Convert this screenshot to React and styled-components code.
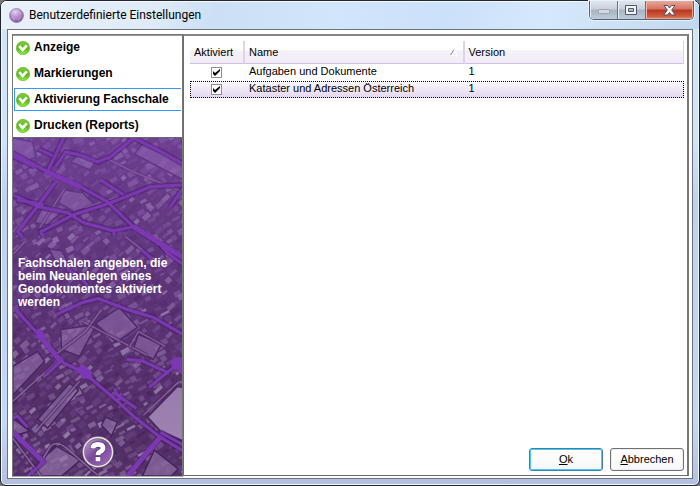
import React, { useState } from "react";
import styled, { createGlobalStyle, css } from "styled-components";

const GlobalStyle = createGlobalStyle`
  *, *::before, *::after { box-sizing: border-box; }
  body {
    margin: 0;
    background: #77777b;
    color: #000;
    font: 11px/13px "Liberation Sans", Arial, sans-serif;
  }
  button, input { font: inherit; color: inherit; margin: 0; }
`;

const Window = styled.div`
  display: flex;
  flex-direction: column;
  min-height: 100vh;
  padding: 0 6px 6px;
  border: 1px solid #23272d;
  border-radius: 7px 7px 6px 6px;
  background: linear-gradient(180deg, #dbe8f7 0, #d0e4fa 40px, #cfe4fb 140px, #bdd2ec 200px, #c3d9f3 420px, #b4bfe0 100%);
  box-shadow: inset 0 0 0 1px #f0f7fe;
`;

const TitleBar = styled.header`
  display: flex;
  align-items: flex-start;
  height: 28px;
  margin: 0 -6px;
  padding-left: 8px;
  border-radius: 6px 6px 0 0;
  background: linear-gradient(100deg, #e9f1fa 0, #dfebf8 22%, #cbdff5 31%, #d1e5fb 48%, #cbe1fa 64%, #d6e8fb 78%, #c2d8f0 100%);
  box-shadow: inset 0 1px 0 #f5faff;
`;

const AppIcon = styled.svg`
  width: 15px;
  height: 15px;
  margin-top: 7px;
`;

const Title = styled.h1`
  flex: 1;
  margin: 5px 0 0 5px;
  font: 400 12px/18px Roboto, "Noto Sans", sans-serif;
`;

const Controls = styled.div`
  display: flex;
  height: 19px;
  margin-right: 5px;
  border: 1px solid #59636e;
  border-top: 0;
  border-radius: 0 0 5px 5px;
  overflow: hidden;
  box-shadow: 0 0 0 1px #e6f1fc;
`;

const ControlButton = styled.button`
  display: grid;
  place-items: center;
  width: 28px;
  padding: 0;
  border: 0;
  border-right: 1px solid #68737e;
  background: linear-gradient(#dfe6ed 0, #c7d1db 45%, #a6b3c1 50%, #bdccdc 100%);
  box-shadow: inset 1px 0 0 #e8eef4;
  ${(p) => p.$close && css`
    width: 47px;
    border-right: 0;
    background: linear-gradient(#e8a99b 0, #d3725f 45%, #b93620 50%, #cf5b3c 85%, #e49277 100%);
    box-shadow: inset 1px 0 0 #edb4a7, inset -1px -1px 0 #e7a28f;
  `}
`;

const Client = styled.main`
  flex: 1;
  display: flex;
  padding: 4px 3px 1px 4px;
  border: 1px solid #6c7279;
  background: #fff;
`;

const Sidebar = styled.aside`
  flex: none;
  display: flex;
  flex-direction: column;
  width: 171px;
  border: 1px solid #777;
  border-bottom-color: #aaa;
`;

const Nav = styled.nav`
  display: flex;
  flex-direction: column;
  gap: 3px;
  padding: 0 1px;
  border-top: 1px solid #999;
  border-bottom: 1px solid #666;
`;

const NavItem = styled.button`
  display: flex;
  align-items: center;
  gap: 4px;
  height: 23px;
  padding: 0 0 0 1px;
  border: 1px solid ${(p) => (p.$current ? "#3399ff" : "transparent")};
  border-right: 0;
  background: #fff;
  font-size: 12px;
  font-weight: 700;
  text-align: left;
  white-space: nowrap;
`;

const CheckIcon = styled.svg`
  flex: none;
  width: 14px;
  height: 14px;
`;

const MapPane = styled.section`
  position: relative;
  isolation: isolate;
  flex: 1;
  display: flex;
  flex-direction: column;
  padding: 119px 5px 8px;
  overflow: hidden;
  color: #fff;
`;

const MapArt = styled.svg`
  position: absolute;
  inset: 0;
  z-index: -1;
  width: 100%;
  height: 100%;
`;

const Hint = styled.p`
  margin: 0 0 auto;
  font-size: 12px;
  font-weight: 700;
`;

const HelpButton = styled.button`
  align-self: center;
  display: block;
  width: 32px;
  height: 32px;
  padding: 0;
  border: 0;
  border-radius: 50%;
  background: none;
`;

const Content = styled.section`
  flex: 1;
  display: flex;
  flex-direction: column;
  min-width: 0;
  margin-bottom: 1px;
  padding: 5px 3px 4px 6px;
  border: 1px solid #6b6b6b;
  border-top: 2px solid #858585;
  border-right: 2px solid #777;
`;

const Table = styled.table`
  width: 100%;
  table-layout: fixed;
  border-collapse: separate;
  border-spacing: 0;
`;

const CheckColumn = styled.col`
  width: 55px;
`;

const HeadCell = styled.th`
  height: 23px;
  padding: 0 5px 0 4px;
  border-right: ${(p) => (p.$last ? 1 : 2)}px solid #e0d2ec;
  border-bottom: 1px solid #d3bfe3;
  background: linear-gradient(#fff 0, #fff 40%, #f5f1f9 45%, #f1ebf6 100%);
  font-weight: 400;
  text-align: left;
`;

const HeadLabel = styled.span`
  display: flex;
  align-items: center;
  justify-content: space-between;
`;

const Row = styled.tr`
  height: 17px;
  ${(p) => p.$selected && css`
    background: linear-gradient(#fbf9fc, #e4d6ee);
    outline: 1px dotted #000;
    outline-offset: -1px;
  `}
`;

const Cell = styled.td`
  height: 17px;
  padding: 0 4px 2px ${(p) => (p.$center ? 2 : 4)}px;
  text-align: ${(p) => (p.$center ? "center" : "left")};
  white-space: nowrap;
`;

const Tick = styled.input`
  appearance: none;
  display: block;
  width: 11px;
  height: 11px;
  margin: 2px auto 0;
  border: 1px solid #8f8f8f;
  background: #fff;
  &:checked {
    background: #fff url("data:image/svg+xml,%3Csvg xmlns='http://www.w3.org/2000/svg' viewBox='0 0 9 9'%3E%3Cpath d='M1 3v3l2 2 5-5V1L3 5z'/%3E%3C/svg%3E") center / 9px 9px;
  }
`;

const Footer = styled.footer`
  display: flex;
  justify-content: flex-end;
  gap: 7px;
  margin-top: auto;
`;

const Button = styled.button`
  width: 74px;
  height: 23px;
  padding: 0;
  border: 1px solid ${(p) => (p.$primary ? "#3c7fb1" : "#707070")};
  border-radius: 3px;
  background: linear-gradient(#fff, #f7f7f9);
  box-shadow: inset 0 0 0 1px ${(p) => (p.$primary ? "#48cdf1" : "#ededf3")};
`;

function createRandom(seed) {
  let value = seed;
  return () => {
    value = (value * 1664525 + 1013904223) % 4294967296;
    return value / 4294967296;
  };
}

const random = createRandom(47);
const roofColours = ["#a88bbf", "#8a62a6", "#6a4784", "#9a7cb2", "#452457", "#b8a3c8", "#71478d"];
const roofs = [];
for (let y = -150; y < 480; y += 7) {
  for (let x = -200; x < 380; x += 9) {
    roofs.push({
      x: x + random() * 4,
      y: y + random() * 3,
      width: 4 + random() * 6,
      height: 2 + random() * 4,
      fill: roofColours[Math.floor(random() * roofColours.length)],
      opacity: 0.3 + random() * 0.5,
      transform: `rotate(${Math.floor(random() * 2) * 15} ${x} ${y})`,
    });
  }
}

const fields = [
  "M0 0 20 4 23 19 9 26-4 12z",
  "M51 52 70 55 82 67 62 74 46 65z",
  "M29 71 49 74 35 87 22 85z",
  "M132 4 171 25V42L122 16z",
  "M83 186 107 170 125 190 104 205z",
  "M0 229 25 214 32 224 0 258z",
  "M25 282 57 246 66 253 35 291z",
  "M126 197 149 207 141 222 121 211z",
  "M67 15 83 24 78 32 58 24z",
  "M36 111 49 113 58 129 42 122z",
  "M0 281 17 294 0 299z",
  "M26 325 44 309 68 323 49 339H17z",
  "M142 313 166 332 159 339H130z",
  "M93 280 105 285 99 299 89 288z",
  "M48 192 84 187 67 219 49 212z",
];

const lanes = [
  "M70 184 135 218 M0 264 48 221 M72 70 106 59 M27 90 52 51",
  "M113 99 153 130 M25 292 67 244 M20 338 38 309Q44 303 54 311L85 338",
  "M131 278 167 244 M12 104 1 116 M89 172 73 194 42 218",
  "M0 301 28 339 M117 210 126 194 153 209 M95 21 121 34 171 54",
];

const roads = [
  "M0 15 35 34 68 49 95 64 121 89 148 107 171 120",
  "M52-2 38 27 34 36 M43 44 26 67 5 94 10 100",
  "M121 0 98 19 85 24 68 17 53 14 43 29 M121 0 146 12 171 26",
  "M171 47 138 49 98 65 61 77 28 94 31 99",
  "M0 57 26 69 55 75 71 85 101 93 121 89 M88 42 111 57",
  "M171 50 158 69 M0 18 22 29 M26 11 40 18 M31 67 4 62",
  "M55 132 68 140 75 148 M44 177 70 165 86 161 115 172 141 180 171 197",
  "M0 169 26 197 48 224 71 235 105 264 121 279 148 300 171 314",
  "M48 224 33 238 M102 251 105 258 124 271 M105 264 109 256",
  "M114 222 131 224 155 235 137 250 M155 235 164 228 171 237",
  "M0 281 5 279 15 290 M0 295 31 325 15 339 M148 300 115 339 M148 295 171 308",
  "M148 107 155 115 171 127 M129 112 139 121 M101 93 102 98",
];

function MapBackground() {
  return (
    <MapArt viewBox="0 0 170 339" preserveAspectRatio="xMidYMid slice" aria-hidden="true">
      <defs>
        <linearGradient id="mapTint" x1="0" y1="0" x2="0" y2="1">
          <stop offset="0" stopColor="#7d49ab" stopOpacity=".6" />
          <stop offset=".5" stopColor="#68398f" stopOpacity=".34" />
          <stop offset="1" stopColor="#402251" stopOpacity=".08" />
        </linearGradient>
      </defs>
      <rect width="171" height="339" fill="#553169" />
      <g transform="rotate(-42 85 170)">
        {roofs.map((roof, i) => <rect key={i} {...roof} />)}
      </g>
      {fields.map((d) => (
        <path key={d} d={d} fill="#9878af" fillOpacity=".7" stroke="#45225b" strokeWidth="1.5" />
      ))}
      <path d="M135 280 165 249 171 250V304L148 294z" fill="#ab91bd" stroke="#4b2762" strokeWidth="2" />
      {lanes.map((d) => (
        <g key={d} fill="none">
          <path d={d} stroke="#442158" strokeWidth="4" opacity=".6" />
          <path d={d} stroke="#9c80ad" strokeWidth="1.5" opacity=".8" />
        </g>
      ))}
      <rect width="171" height="339" fill="url(#mapTint)" />
      <g fill="none" strokeLinejoin="round">
        {roads.map((d) => <path key={d} d={d} stroke="#43205f" strokeWidth="6" opacity=".5" />)}
        {roads.map((d) => <path key={d} d={d} stroke="#7c37b3" strokeWidth="3" />)}
        <path d="M32 33 68 49 M121 89 171 120 M26 197 48 224 M65 232 79 241 M148 300 115 339 M0 295 31 325" stroke="#7c37b3" strokeWidth="5" />
      </g>
      <path d="m24 192 4-1 5 8-4 4-6-3z m42 39 3-5 11 9-2 7-9-1z m92-6 5-5h7v12h-9z" fill="#7c37b3" />
    </MapArt>
  );
}

function GreenCheck() {
  return (
    <CheckIcon viewBox="0 0 14 14" aria-hidden="true">
      <defs>
        <linearGradient id="green" x1="0" y1="0" x2="0" y2="1">
          <stop stopColor="#7fcf3c" /><stop offset=".55" stopColor="#5bb81a" /><stop offset="1" stopColor="#8df03a" />
        </linearGradient>
      </defs>
      <circle cx="7" cy="7" r="6.7" fill="url(#green)" stroke="#62b22a" strokeWidth=".6" />
      <path d="M3.2 5.2 6.6 9l4.2-4.6" fill="none" stroke="#fff" strokeWidth="2.7" />
    </CheckIcon>
  );
}

const pages = ["Anzeige", "Markierungen", "Aktivierung Fachschale", "Drucken (Reports)"];
const modules = [
  { name: "Aufgaben und Dokumente", version: "1" },
  { name: "Kataster und Adressen Österreich", version: "1" },
];

export default function App() {
  const [page, setPage] = useState(2);
  const [selected, setSelected] = useState(1);
  return (
    <>
      <GlobalStyle />
      <Window>
        <TitleBar>
          <AppIcon viewBox="0 0 15 15" aria-hidden="true">
            <defs>
              <radialGradient id="orb" cx=".4" cy=".25" r=".8">
                <stop stopColor="#e6d5f0" /><stop offset=".45" stopColor="#b590cb" /><stop offset="1" stopColor="#7c4b98" />
              </radialGradient>
            </defs>
            <circle cx="7.5" cy="7.5" r="7" fill="url(#orb)" stroke="#8e75a0" strokeWidth=".7" />
            <path d="M2 6q5-5 11 0M2 9q6 4 11 0M5 2q-3 5 0 11M10 2q3 5-1 11" fill="none" stroke="#ddc4e9" strokeWidth=".8" opacity=".45" />
          </AppIcon>
          <Title>Benutzerdefinierte Einstellungen</Title>
          <Controls>
            <ControlButton type="button" aria-label="Minimieren" disabled>
              <svg width="14" height="8" viewBox="0 0 14 8"><rect x="1.5" y="3.5" width="11" height="4" rx="1" fill="#d6dadd" stroke="#9ca5ac" /></svg>
            </ControlButton>
            <ControlButton type="button" aria-label="Maximieren">
              <svg width="13" height="11" viewBox="0 0 13 11"><path fillRule="evenodd" d="M.5.5h11v9H.5zM3.5 3.5h5v3h-5z" fill="#f4f4f5" stroke="#50586c" /></svg>
            </ControlButton>
            <ControlButton type="button" aria-label="Schließen" $close>
              <svg width="13" height="11" viewBox="0 0 13 11"><path d="M1 .5h3.5l2 2.5 2-2.5H12L8.7 5l3.5 5H8.5l-2-2.5-2 2.5H.8l3.5-5z" fill="#f8f8f8" stroke="#565160" /></svg>
            </ControlButton>
          </Controls>
        </TitleBar>
        <Client>
          <Sidebar>
            <Nav aria-label="Einstellungen">
              {pages.map((name, i) => (
                <NavItem key={name} type="button" $current={i === page} aria-current={i === page ? "page" : undefined} onClick={() => setPage(i)}>
                  <GreenCheck />{name}
                </NavItem>
              ))}
            </Nav>
            <MapPane>
              <MapBackground />
              <Hint>Fachschalen angeben, die beim Neuanlegen eines Geodokumentes aktiviert werden</Hint>
              <HelpButton type="button" aria-label="Hilfe">
                <svg width="32" height="32" viewBox="0 0 32 32" aria-hidden="true">
                  <defs>
                    <linearGradient id="help" x1="0" y1="0" x2="1" y2="1">
                      <stop stopColor="#c5a7da" /><stop offset=".48" stopColor="#7b4a9b" /><stop offset="1" stopColor="#a36bc9" />
                    </linearGradient>
                  </defs>
                  <circle cx="16" cy="16" r="14.6" fill="url(#help)" stroke="#6d5c72" strokeWidth="2.6" />
                  <circle cx="16" cy="16" r="14.5" fill="none" stroke="#e7e2e4" strokeWidth="1.5" />
                  <path d="M10.8 12.8q.2-4.4 5.2-4.4 5 0 5 3.7 0 2.3-2.8 3.5-2.2 1-2.2 3.4M16 20.6v5" fill="none" stroke="#5b3b64" strokeWidth="6.2" />
                  <path d="M10.8 12.4q.2-4 5.2-4 5 0 5 3.7 0 2.3-2.8 3.5-2.2 1-2.2 3.4M16 21v4.2" fill="none" stroke="#fff" strokeWidth="4.8" />
                </svg>
              </HelpButton>
            </MapPane>
          </Sidebar>
          <Content>
            <Table>
              <colgroup><CheckColumn /><col /><col /></colgroup>
              <thead>
                <tr>
                  <HeadCell scope="col">Aktiviert</HeadCell>
                  <HeadCell scope="col" aria-sort="ascending">
                    <HeadLabel>
                      Name
                      <svg width="8" height="7" viewBox="0 0 8 7" aria-hidden="true"><path d="M.5 6 4 .5" stroke="#8b8b8b" /><path d="m4 .5 3.5 6H.5" fill="none" stroke="#fff" /></svg>
                    </HeadLabel>
                  </HeadCell>
                  <HeadCell scope="col" $last>Version</HeadCell>
                </tr>
              </thead>
              <tbody>
                {modules.map((module, i) => (
                  <Row key={module.name} $selected={i === selected} onClick={() => setSelected(i)}>
                    <Cell $center><Tick type="checkbox" defaultChecked aria-label={module.name} /></Cell>
                    <Cell>{module.name}</Cell>
                    <Cell>{module.version}</Cell>
                  </Row>
                ))}
              </tbody>
            </Table>
            <Footer>
              <Button type="button" $primary><u>O</u>k</Button>
              <Button type="button"><u>A</u>bbrechen</Button>
            </Footer>
          </Content>
        </Client>
      </Window>
    </>
  );
}
